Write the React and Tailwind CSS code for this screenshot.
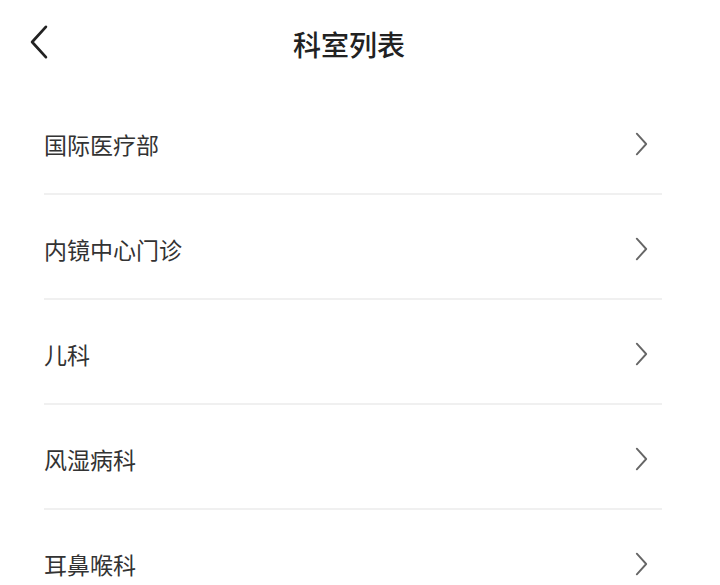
import { useState } from 'react';

const departments = ['国际医疗部', '内镜中心门诊', '儿科', '风湿病科', '耳鼻喉科'];

const Chevron = ({ dir = 'right', className = '' }) => (
    <svg viewBox="0 0 16 26" className={className} fill="none" stroke="currentColor" strokeWidth="2" strokeLinecap="round" strokeLinejoin="round">
        {dir === 'right' ? <path d="M3 2 L13 13 L3 24" /> : <path d="M13 2 L3 13 L13 24" />}
    </svg>
);

const App = () => {
    const [active, setActive] = useState(null);

    return (
        <div className="w-[720px] h-[585px] bg-white overflow-hidden" style={{ fontFamily: '"Noto Sans CJK SC", "Noto Sans", sans-serif' }}>
            {/* Header */}
            <div className="relative h-[90px] flex items-center justify-center pr-[22px]">
                <button className="absolute left-[28px] top-[24px] text-[#222]">
                    <Chevron dir="left" className="w-[22px] h-[36px]" />
                </button>
                <h1 className="text-[28px] text-[#222] font-medium pb-[2px]">科室列表</h1>
            </div>

            {/* List */}
            <div className="flex flex-col">
                {departments.map((name, i) => (
                    <div
                        key={name}
                        onClick={() => setActive(i)}
                        className={`ml-[44px] w-[618px] h-[105px] shrink-0 border-b-2 border-[#f0f0f0] flex items-center justify-between pt-[5px] pr-[13px] cursor-pointer ${active === i ? 'bg-gray-50' : ''}`}
                    >
                        <span className="text-[23px] text-[#333]">{name}</span>
                        <Chevron className="w-[15px] h-[28px] text-[#666]" />
                    </div>
                ))}
            </div>
        </div>
    );
};

export default App;
